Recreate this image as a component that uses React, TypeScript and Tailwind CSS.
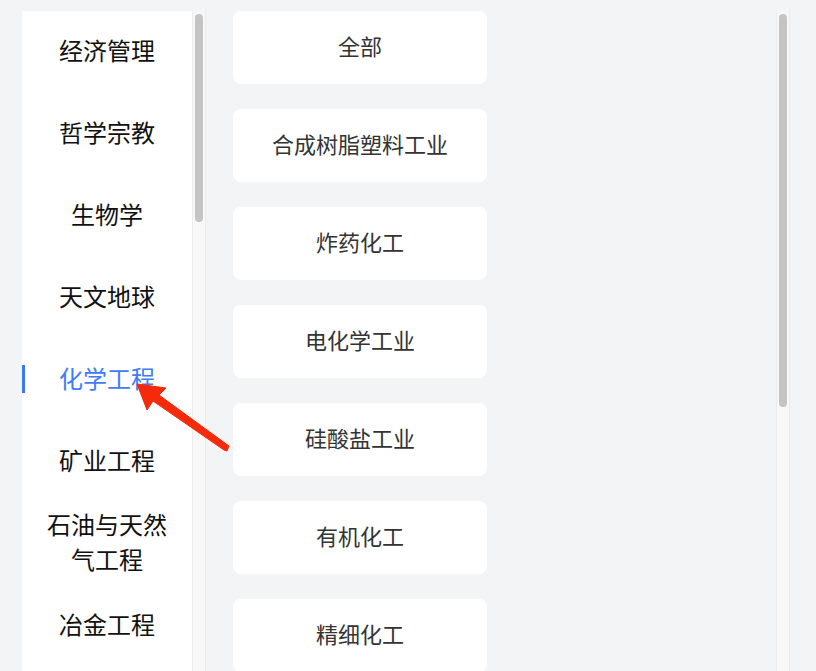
const CATEGORIES = ['经济管理', '哲学宗教', '生物学', '天文地球', '化学工程', '矿业工程', '石油与天然气工程', '冶金工程'];
const ACTIVE = 4;
const SUBS = ['全部', '合成树脂塑料工业', '炸药化工', '电化学工业', '硅酸盐工业', '有机化工', '精细化工'];

export default function App() {
  return (
    <div
      className="relative h-[671px] w-[816px] overflow-hidden bg-[#f3f4f6]"
      style={{ fontFamily: '"Noto Sans CJK SC", "Noto Sans", sans-serif' }}
    >
      <div className="flex pt-[11px] pl-[22px]">
        {/* 左侧分类 */}
        <div className="flex h-[660px] bg-white">
          <ul className="w-[170px]">
            {CATEGORIES.map((name, i) => (
              <li key={name} className="relative flex h-[82px] items-center justify-center pb-[6px]">
                {i === ACTIVE && <span className="absolute left-0 top-[26px] h-[28px] w-[3px] bg-[#3a7af7]" />}
                <span
                  className={
                    'px-6 text-center text-[24px] leading-[35px] ' +
                    (i === ACTIVE ? 'text-[#3d7cf6]' : 'text-[#111111]')
                  }
                >
                  {name === '石油与天然气工程' ? (
                    <>
                      石油与天然
                      <br />
                      气工程
                    </>
                  ) : (
                    name
                  )}
                </span>
              </li>
            ))}
          </ul>
          <div className="w-[14px] border-x border-[#ececec] bg-[#f8f8f8] px-[2px] pt-[3px]">
            <div className="h-[208px] rounded-full bg-[#c4c4c4]" />
          </div>
        </div>

        {/* 右侧子类 */}
        <div className="ml-[27px] flex w-[254px] flex-col gap-[25px]">
          {SUBS.map((s) => (
            <div key={s} className="flex h-[73px] shrink-0 items-center justify-center rounded-lg bg-white pb-[4px] text-[22px] text-[#333333]">
              {s}
            </div>
          ))}
        </div>

        <div className="ml-[289px] h-[660px] w-[14px] border-x border-[#ececec] bg-[#f8f8f8] px-[2px] pt-[3px]">
          <div className="h-[393px] rounded-full bg-[#c4c4c4]" />
        </div>
      </div>

      {/* 标注箭头 */}
      <svg className="absolute left-0 top-0" width="816" height="671">
        <polygon
          points="137,384 166,388 159,395 229,446 227,451 224,450 153,401 147,410"
          fill="#f52a0a"
          stroke="#f52a0a"
          strokeWidth="1"
          strokeLinejoin="round"
        />
      </svg>
    </div>
  );
}
